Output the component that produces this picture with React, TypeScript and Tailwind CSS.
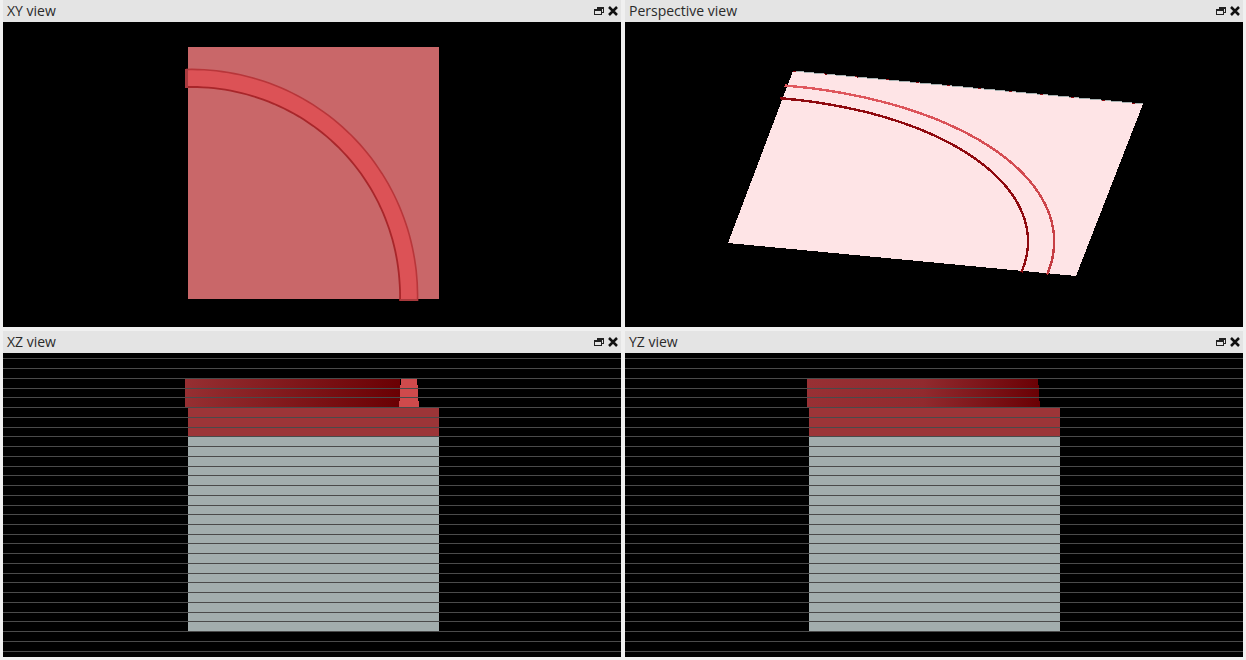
import * as React from "react"

// plate corners in the perspective view, used to project the ring on to it
const quad = [
  [793, 71],
  [1143, 104],
  [1076, 276],
  [728, 243],
]

function project(u: number, v: number) {
  const [[x0, y0], [x1, y1], [x2, y2], [x3, y3]] = quad
  const dx1 = x1 - x2
  const dx2 = x3 - x2
  const sx = x0 - x1 + x2 - x3
  const dy1 = y1 - y2
  const dy2 = y3 - y2
  const sy = y0 - y1 + y2 - y3
  const den = dx1 * dy2 - dx2 * dy1
  const g = (sx * dy2 - dx2 * sy) / den
  const h = (dx1 * sy - sx * dy1) / den
  const w = g * u + h * v + 1
  const x = ((x1 - x0 + g * x1) * u + (x3 - x0 + h * x3) * v + x0) / w
  const y = ((y1 - y0 + g * y1) * u + (y3 - y0 + h * y3) * v + y0) / w
  return `${x.toFixed(1)},${y.toFixed(1)}`
}

// the ring is not a true circle, it bulges a little on the diagonal
function arc(r: number) {
  const pts: [number, number][] = []
  for (let i = 0; i <= 60; i++) {
    const a = (i / 60) * (Math.PI / 2)
    const rr = r + 2.5 * Math.sin(2 * a)
    pts.push([186 + rr * Math.sin(a), 301 - rr * Math.cos(a)])
  }
  return pts
}

const toPoints = (pts: [number, number][]) => pts.map(([x, y]) => `${x.toFixed(1)},${y.toFixed(1)}`).join(" ")
const toPlate = (pts: [number, number][]) => pts.map(([x, y]) => project((x - 188) / 251, (y - 47) / 252)).join(" ")

const outer = arc(231.5)
const inner = arc(214)
const gridLines = Array.from({ length: 31 }, (_, i) => Math.round(358.4 + i * 9.74))

function Panel({ title, children }: { title: string; children: React.ReactNode }) {
  return (
    <div className="flex flex-col min-h-0">
      <div className="flex h-[22px] shrink-0 items-center justify-between bg-[#e4e4e4] pl-1 pr-[3px]">
        <span className="text-[14px] leading-none text-[#2a2a2a] [font-family:'Open_Sans',sans-serif]">{title}</span>
        <div className="flex items-center gap-[4px]">
          <svg width="10" height="10" viewBox="0 0 10 10" fill="none" stroke="#222" strokeWidth="1" shapeRendering="crispEdges">
            <path d="M3.5 3.5V1.5H9.5V6.5H7.5" />
            <path d="M3.5 2.5H9.5" />
            <rect x="0.5" y="3.5" width="7" height="5" />
            <path d="M0.5 4.5H7.5" />
          </svg>
          <svg width="10" height="10" viewBox="0 0 10 10" fill="none" stroke="#111" strokeWidth="2.5">
            <path d="M1 1L9 9M9 1L1 9" />
          </svg>
        </div>
      </div>
      <div className="flex-1 min-h-0 bg-black">{children}</div>
    </div>
  )
}

function Grid({ x }: { x: number }) {
  return (
    <>
      {gridLines.map((y) => (
        <rect key={y} x={x} y={y} width="618" height="1" fill="#4a4a4a" />
      ))}
    </>
  )
}

export default function App() {
  return (
    <div className="grid h-[660px] w-[1246px] grid-cols-[618px_618px] grid-rows-[327px_326px] gap-1 overflow-hidden bg-[#f0f0f0] px-[3px]">
      <Panel title="XY view">
        <svg className="block h-full w-full" viewBox="3 22 618 305">
          <rect x="188" y="47" width="251" height="252" fill="#c96769" shapeRendering="crispEdges" />
          <polygon points={toPoints([...outer, ...[...inner].reverse()])} fill="#dc5256" />
          <polyline points={toPoints(outer)} fill="none" stroke="#b8363a" strokeWidth="1.6" />
          <polyline points={toPoints(inner)} fill="none" stroke="#a8262a" strokeWidth="1.8" />
          <rect x="185" y="69" width="3" height="19" fill="#a83a3e" shapeRendering="crispEdges" />
          <rect x="400" y="299" width="18" height="2" fill="#a8393c" shapeRendering="crispEdges" />
        </svg>
      </Panel>

      <Panel title="Perspective view">
        <svg className="block h-full w-full" viewBox="625 22 618 305" shapeRendering="crispEdges">
          <defs>
            <linearGradient id="ring-edge" gradientUnits="userSpaceOnUse" x1="0" x2="0" y1="86" y2="275">
              <stop offset="0" stopColor="#e0585e" />
              <stop offset="1" stopColor="#c23a40" />
            </linearGradient>
          </defs>
          <polygon points="793,71 1143,104 1076,276 728,243" fill="#fee4e6" />
          <line x1="793" y1="71" x2="1143" y2="104" stroke="#a8b2b2" strokeWidth="1" />
          <line x1="793" y1="71" x2="1143" y2="104" stroke="#8c0a10" strokeWidth="1" strokeDasharray="3 28" />
          <polyline points={toPlate(arc(232.5))} fill="none" stroke="url(#ring-edge)" strokeWidth="2.4" />
          <polyline points={toPlate(inner)} fill="none" stroke="#8f0a10" strokeWidth="2.4" />
        </svg>
      </Panel>

      <Panel title="XZ view">
        <svg className="block h-full w-full" viewBox="3 353 618 304" shapeRendering="crispEdges">
          <defs>
            <linearGradient id="xz-fade" x1="0" x2="1" y1="0" y2="0">
              <stop offset="0" stopColor="#962f32" />
              <stop offset="1" stopColor="#6a0003" />
            </linearGradient>
          </defs>
          <rect x="188" y="436" width="251" height="195" fill="#a2adad" />
          <rect x="188" y="407" width="251" height="29" fill="#9c3538" />
          <rect x="185" y="378" width="215" height="29" fill="url(#xz-fade)" />
          <polygon points="401,378 417,378 417,385 418,385 418,401 419,401 419,407 399,407 399,401 400,401 400,385 401,385" fill="#cf4a4c" />
          <Grid x={3} />
        </svg>
      </Panel>

      <Panel title="YZ view">
        <svg className="block h-full w-full" viewBox="625 353 618 304" shapeRendering="crispEdges">
          <defs>
            <linearGradient id="yz-fade" x1="0" x2="1" y1="0" y2="0">
              <stop offset="0" stopColor="#983034" />
              <stop offset="0.5" stopColor="#912a2e" />
              <stop offset="1" stopColor="#6a0004" />
            </linearGradient>
          </defs>
          <rect x="809" y="436" width="251" height="195" fill="#a2adad" />
          <rect x="809" y="407" width="251" height="29" fill="#9c3538" />
          <polygon points="807,378 1038,378 1038,385 1039,385 1039,401 1040,401 1040,407 807,407" fill="url(#yz-fade)" />
          <Grid x={625} />
        </svg>
      </Panel>
    </div>
  )
}
